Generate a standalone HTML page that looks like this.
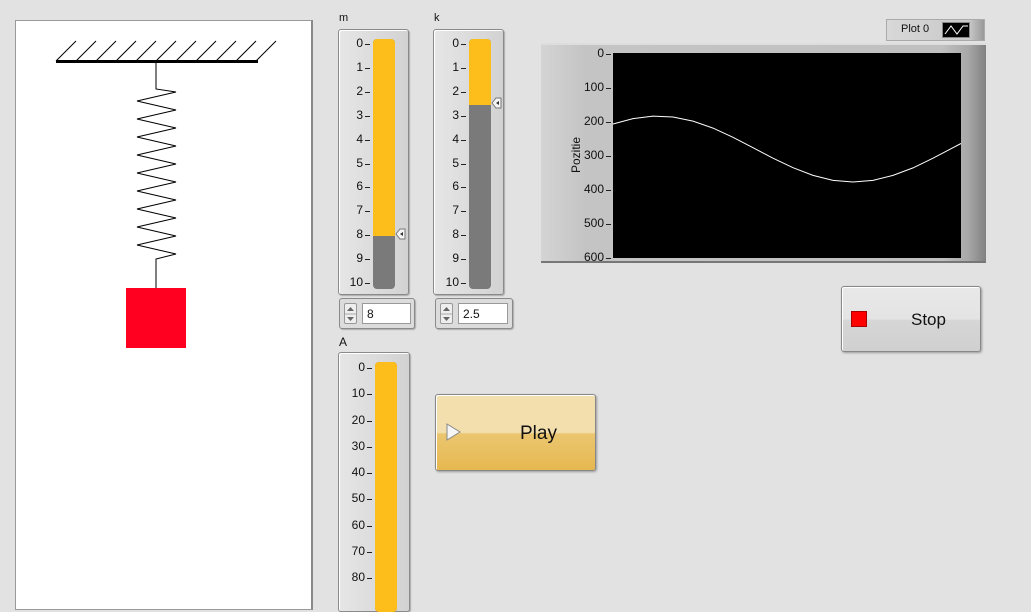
<!DOCTYPE html>
<html><head><meta charset="utf-8"><style>
*{margin:0;padding:0;box-sizing:border-box}
body{width:1031px;height:598px;background:#e2e2e2;position:relative;overflow:hidden;font-family:"Liberation Sans",sans-serif;font-size:11px;color:#111}
.a{position:absolute}
.frame{position:absolute;border:1px solid #8a8a8a;border-radius:3px;background:linear-gradient(90deg,#e6e6e6,#d2d2d2);box-shadow:1px 1px 1px #aaa, inset 1px 1px 0 #fff}
.track{position:absolute;background:#7a7a7a;border-radius:4px;overflow:hidden}
.fill{position:absolute;left:0;top:0;width:100%;background:#fdbd1a}
.lbl{position:absolute;width:30px;text-align:right;font-size:12px;line-height:13px;z-index:5}
.tk{position:absolute;width:5px;height:1px;background:#222;z-index:5}
.num{position:absolute;border:1px solid #8a8a8a;border-radius:3px;background:#dcdcdc;box-shadow:1px 1px 1px #aaa}
.tb{position:absolute;background:#fff;border:1px solid #999;font-size:12px;padding:3px 0 0 4px}
.spin{position:absolute;width:13px;height:21px;border:1px solid #999;border-radius:2px;background:#eee}
</style></head><body>
<div class="a" style="left:15px;top:20px;width:298px;height:590px;background:#fff;border:1px solid #999;border-right:2px solid #888"></div>
<svg class="a" style="left:0;top:0" width="330" height="598">
<g stroke="#000" stroke-width="1" fill="none">
<path d="M56 61l20-20M76 61l20-20M96 61l20-20M116 61l20-20M136 61l20-20M156 61l20-20M176 61l20-20M196 61l20-20M216 61l20-20M236 61l20-20M256 61l20-20"/>
<line x1="56" y1="61.5" x2="258" y2="61.5" stroke-width="3"/>
<polyline points="156,61 156,89 176,92 137,101 176,110 137,119 176,128 137,137 176,146 137,155 176,164 137,173 176,182 137,191 176,200 137,209 176,218 137,227 176,236 137,245 176,254 156,259 156,288"/>
</g>
<rect x="126" y="288" width="60" height="60" fill="#ff0020"/>
</svg>

<div class="a" style="left:339px;top:12px">m</div>
<div class="frame" style="left:338px;top:29px;width:71px;height:266px"></div>
<div class="track" style="left:373px;top:39px;width:22px;height:250px"><div class="fill" style="height:197px"></div></div>
<svg class="a" style="left:395px;top:228px" width="12" height="12"><path d="M1 6L5 1H10V11H5Z" fill="#f4f4f4" stroke="#777"/><path d="M5 6l3-2v4z" fill="#333"/></svg>
<div class="num" style="left:339px;top:298px;width:76px;height:31px"></div>
<div class="spin" style="left:344px;top:303px"></div>
<div class="tb" style="left:362px;top:303px;width:49px;height:21px">8</div>

<div class="a" style="left:434px;top:12px">k</div>
<div class="frame" style="left:433px;top:29px;width:71px;height:266px"></div>
<div class="track" style="left:469px;top:39px;width:22px;height:250px"><div class="fill" style="height:66px"></div></div>
<svg class="a" style="left:491px;top:97px" width="12" height="12"><path d="M1 6L5 1H10V11H5Z" fill="#f4f4f4" stroke="#777"/><path d="M5 6l3-2v4z" fill="#333"/></svg>
<div class="num" style="left:435px;top:298px;width:78px;height:31px"></div>
<div class="spin" style="left:440px;top:303px"></div>
<div class="tb" style="left:458px;top:303px;width:50px;height:21px">2.5</div>
<svg class="a" style="left:0;top:0;z-index:6" width="520" height="340"><g fill="#666"><path d="M347 311l3.5-4 3.5 4z"/><path d="M347 317l3.5 4 3.5-4z"/><path d="M443 311l3.5-4 3.5 4z"/><path d="M443 317l3.5 4 3.5-4z"/></g><g stroke="#aaa"><line x1="345" y1="314" x2="356" y2="314"/><line x1="441" y1="314" x2="452" y2="314"/></g></svg>

<div class="a" style="left:339px;top:335px;font-size:12px">A</div>
<div class="frame" style="left:338px;top:352px;width:72px;height:260px"></div>
<div class="track" style="left:375px;top:362px;width:22px;height:250px"><div class="fill" style="height:250px"></div></div>

<div class="a" style="left:886px;top:19px;width:99px;height:22px;background:linear-gradient(90deg,#d8d8d8,#c8c8c8 85%,#999);border:1px solid #aaa"></div>
<div class="a" style="left:901px;top:23px;font-size:11px">Plot 0</div>
<svg class="a" style="left:942px;top:22px" width="28" height="16"><rect x="0.5" y="0.5" width="27" height="15" fill="#000" stroke="#888"/><path d="M3 12L9 4L15 12L21 4L26 4" stroke="#fff" fill="none"/></svg>
<div class="a" style="left:541px;top:43px;width:445px;height:220px;background:linear-gradient(90deg,#d4d4d4 0,#c4c4c4 10%,#c0c0c0 90%,#a8a8a8 96%,#808080 100%);border-top:2px solid #ddd;border-bottom:2px solid #777"></div>
<div class="a" style="left:569px;top:173px;transform:rotate(-90deg);transform-origin:0 0;font-size:12px">Pozitie</div>
<div class="a" style="left:613px;top:53px;width:348px;height:205px;background:#000"></div>
<svg class="a" style="left:0;top:0" width="1031" height="300"><polyline fill="none" stroke="#fff" stroke-width="1" points="613,124 633,118.6 653,116.1 673,117 693,121.1 713,128.1 733,137.3 753,147.7 773,158.2 793,167.7 813,175.4 833,180.4 853,182 873,180.4 893,175.4 913,167.9 933,158.2 953,147.7 961,143.5"/></svg>

<div class="a" style="left:435px;top:394px;width:161px;height:77px;border:1px solid #888;border-radius:3px;background:linear-gradient(#f3dfae 0,#f3dfae 50%,#ebc670 52%,#e6b850 100%);box-shadow:1px 1px 2px #999, inset 1px 1px 0 #fff"></div>
<svg class="a" style="left:446px;top:423px" width="16" height="18"><path d="M1 1L14 9L1 17Z" fill="#f6f6f6" stroke="#888"/></svg>
<div class="a" style="left:520px;top:423px;font-size:19px">Play</div>

<div class="a" style="left:841px;top:286px;width:140px;height:66px;border:1px solid #888;border-radius:3px;background:linear-gradient(#e8e8e8 0,#e4e4e4 50%,#d6d6d6 52%,#d0d0d0 100%);box-shadow:1px 1px 2px #999, inset 1px 1px 0 #fff"></div>
<div class="a" style="left:851px;top:311px;width:16px;height:16px;background:#f00;border:1px solid #a00"></div>
<div class="a" style="left:911px;top:310px;font-size:17px">Stop</div>

<script>
function lab(x,y0,step,vals){var s='';vals.forEach(function(v,i){var y=Math.round(y0+step*i);s+='<div class="lbl" style="left:'+(x-31)+'px;top:'+(y-7)+'px">'+v+'</div><div class="tk" style="left:'+(x+1)+'px;top:'+y+'px"></div>';});document.write(s);}
lab(364,44,23.9,[0,1,2,3,4,5,6,7,8,9,10]);
lab(460,44,23.9,[0,1,2,3,4,5,6,7,8,9,10]);
lab(366,368,26.25,[0,10,20,30,40,50,60,70,80]);
lab(605,54,34,[0,100,200,300,400,500,600]);
</script>
</body></html>
